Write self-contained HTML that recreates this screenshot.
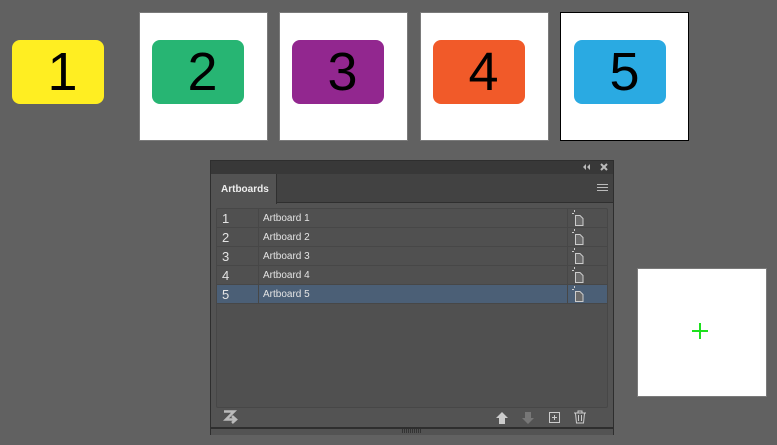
<!DOCTYPE html>
<html><head><style>
*{margin:0;padding:0;box-sizing:border-box}
body{width:777px;height:445px;background:#616161;position:relative;overflow:hidden;font-family:"Liberation Sans",sans-serif}
.ab{position:absolute;top:12px;width:129px;height:129px;background:#fff;border:1px solid #7a7a7a}
.c{position:absolute;width:92px;height:64px;border-radius:8px;color:#000;font-size:54px;line-height:64px;text-align:center;padding-left:9px}
.abs{position:absolute}
.panel{position:absolute;left:210px;top:160px;width:404px;height:275px;background:#535353;border:1px solid #2e2e2e}
.row{position:absolute;left:0;width:390px;height:19px;border-bottom:1px solid #474747;color:#e4e4e4}
.row .n{position:absolute;left:5px;top:2px;font-size:13px}
.row .t{position:absolute;left:46px;top:4px;font-size:10px}
.row .d{position:absolute;left:41px;top:0;width:1px;height:19px;background:#474747}
.row .d2{position:absolute;left:350px;top:0;width:1px;height:19px;background:#474747}
.row svg{position:absolute;left:354px;top:1px}
</style></head><body>
<div class="c" style="left:12px;top:40px;background:#ffee22">1</div>
<div class="ab" style="left:139px"></div><div class="c" style="left:152px;top:40px;background:#27b573">2</div>
<div class="ab" style="left:279px"></div><div class="c" style="left:292px;top:40px;background:#92278f">3</div>
<div class="ab" style="left:420px"></div><div class="c" style="left:433px;top:40px;background:#f15a29">4</div>
<div class="ab" style="left:560px;border-color:#000"></div><div class="c" style="left:574px;top:40px;background:#2aaae2">5</div>

<div class="abs" style="left:637px;top:268px;width:130px;height:129px;background:#fff;border:1px solid #7a7a7a"></div>
<div class="abs" style="left:692px;top:330px;width:16px;height:2px;background:#1de01d"></div>
<div class="abs" style="left:699px;top:323px;width:2px;height:16px;background:#1de01d"></div>

<div class="panel">
 <div class="abs" style="left:0;top:0;width:402px;height:13px;background:#383838"></div>
 <svg class="abs" style="left:372px;top:3px" width="8" height="7"><path d="M3 0v6L0 3zM7 0v6L4 3z" fill="#bbb"/></svg>
 <svg class="abs" style="left:389px;top:2px" width="8" height="8"><path d="M1 1l6 6M7 1l-6 6" stroke="#bbb" stroke-width="2"/></svg>
 <div class="abs" style="left:0;top:13px;width:402px;height:29px;background:#424242;border-bottom:1px solid #2f2f2f"></div>
 <div class="abs" style="left:0;top:13px;width:66px;height:30px;background:#535353;border-right:1px solid #2f2f2f;color:#eee;font-size:10px;font-weight:bold;padding:10px 0 0 10px">Artboards</div>
 <div class="abs" style="left:386px;top:23px;width:11px;height:1px;background:#bbb;box-shadow:0 3px #bbb,0 6px #bbb"></div>
 <div class="abs" style="left:5px;top:47px;width:392px;height:200px;border:1px solid #474747;border-radius:2px;background:#505050">
  <div class="row" style="top:0"><span class="n">1</span><span class="d"></span><span class="t">Artboard 1</span><span class="d2"></span><svg width="14" height="17"><path d="M4.5 5.5h4.5l3 3v7h-7.5z" fill="#6a6a6a" stroke="#ccc"/><path d="M1 3.5h2M3.5 0v2" stroke="#ccc"/></svg></div>
  <div class="row" style="top:19px"><span class="n">2</span><span class="d"></span><span class="t">Artboard 2</span><span class="d2"></span><svg width="14" height="17"><path d="M4.5 5.5h4.5l3 3v7h-7.5z" fill="#6a6a6a" stroke="#ccc"/><path d="M1 3.5h2M3.5 0v2" stroke="#ccc"/></svg></div>
  <div class="row" style="top:38px"><span class="n">3</span><span class="d"></span><span class="t">Artboard 3</span><span class="d2"></span><svg width="14" height="17"><path d="M4.5 5.5h4.5l3 3v7h-7.5z" fill="#6a6a6a" stroke="#ccc"/><path d="M1 3.5h2M3.5 0v2" stroke="#ccc"/></svg></div>
  <div class="row" style="top:57px"><span class="n">4</span><span class="d"></span><span class="t">Artboard 4</span><span class="d2"></span><svg width="14" height="17"><path d="M4.5 5.5h4.5l3 3v7h-7.5z" fill="#6a6a6a" stroke="#ccc"/><path d="M1 3.5h2M3.5 0v2" stroke="#ccc"/></svg></div>
  <div class="row" style="top:76px;background:#4b5f76"><span class="n">5</span><span class="d"></span><span class="t">Artboard 5</span><span class="d2"></span><svg width="14" height="17"><path d="M4.5 5.5h4.5l3 3v7h-7.5z" fill="#6a6a6a" stroke="#ccc"/><path d="M1 3.5h2M3.5 0v2" stroke="#ccc"/></svg></div>
 </div>
 <svg class="abs" style="left:12px;top:249px" width="16" height="16"><path d="M1 1.5h10L3 9.5h10M9 6l4 3.5-4 3.5" stroke="#bbb" stroke-width="2.5" fill="none"/></svg>
 <svg class="abs" style="left:284px;top:250px" width="14" height="14"><path d="M7 1l6 6h-3v6h-6v-6h-3z" fill="#ccc"/></svg>
 <svg class="abs" style="left:310px;top:250px" width="14" height="14"><path d="M7 13l6-6h-3v-6h-6v6h-3z" fill="#777"/></svg>
 <svg class="abs" style="left:337px;top:250px" width="14" height="14"><rect x="1.5" y="1.5" width="10" height="10" fill="none" stroke="#ccc"/><path d="M6.5 4v5M4 6.5h5" stroke="#ccc"/></svg>
 <svg class="abs" style="left:362px;top:249px" width="14" height="14"><path d="M1 3h12M5 3v-2h4v2M2.5 3.5l1 9.5h7l1-9.5M5.5 5v6M8.5 5v6" stroke="#ccc" fill="none"/></svg>
 <div class="abs" style="left:0;top:266px;width:402px;height:2px;background:#2e2e2e"></div>
 <div class="abs" style="left:0;top:268px;width:402px;height:6px;background:#535353"></div>
 <div class="abs" style="left:191px;top:268px;width:20px;height:4px;background:repeating-linear-gradient(90deg,#333 0 1px,transparent 1px 2px)"></div>
</div>
</body></html>
